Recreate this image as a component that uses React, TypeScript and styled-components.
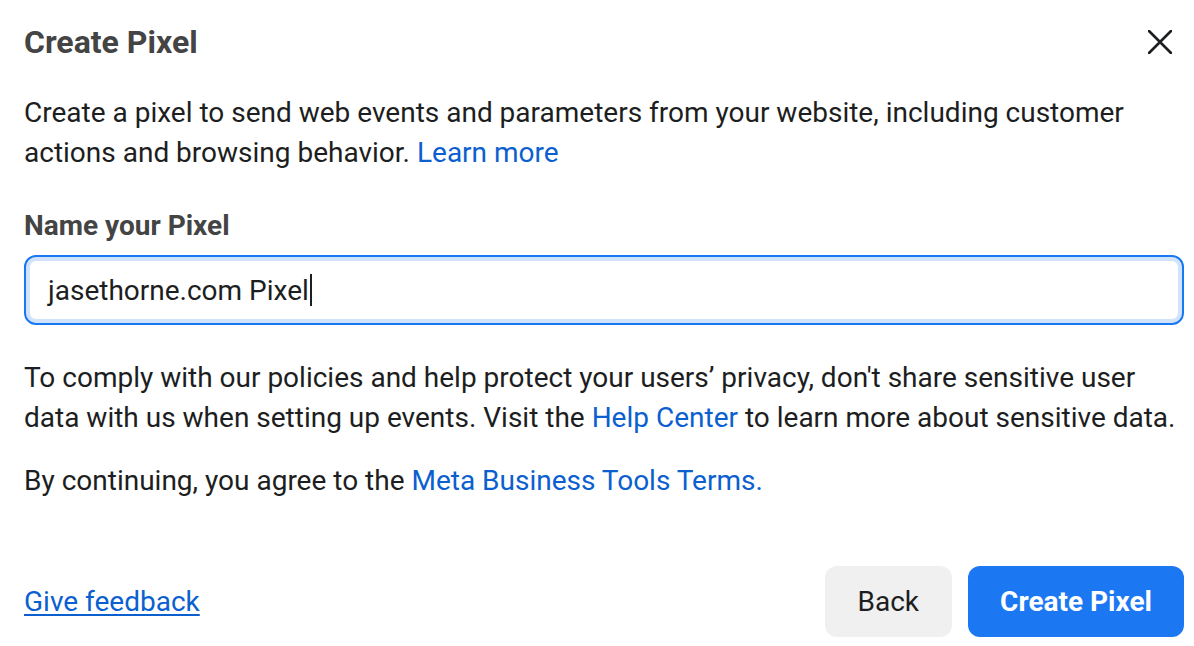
import React from "react";
import styled, { createGlobalStyle } from "styled-components";

const Global = createGlobalStyle`
  html, body { margin: 0; padding: 0; background: #fff; }
  body { font-family: Roboto, "Liberation Sans", Arial, sans-serif; -webkit-font-smoothing: antialiased; }
`;

const Dialog = styled.div`
  width: 1194px;
  height: 646px;
  box-sizing: border-box;
  padding: 0 10px 0 24px;
  display: flex;
  flex-direction: column;
  background: #fff;
`;

const Header = styled.div`
  height: 84px;
  display: flex;
  align-items: center;
  justify-content: space-between;
`;

const Title = styled.h1`
  margin: 0;
  font-size: 32px;
  font-weight: 700;
  color: #444444;
  line-height: 40px;
`;

const CloseButton = styled.button`
  border: none;
  background: transparent;
  padding: 0;
  width: 28px;
  height: 28px;
  margin-right: 10px;
  display: flex;
  align-items: center;
  justify-content: center;
  cursor: pointer;
`;

const Text = styled.p<{ $mt: number }>`
  margin: ${(p) => p.$mt}px 0 0;
  font-size: 28px;
  line-height: 39.5px;
  color: #1c1e21;
`;

const Link = styled.a<{ $underline?: boolean }>`
  color: #0b5fcf;
  text-decoration: ${(p) => (p.$underline ? "underline" : "none")};
  text-underline-offset: 3px;
  text-decoration-thickness: 2px;
  cursor: pointer;
`;

const FeedbackLink = styled(Link)`
  font-size: 28px;
`;

const Label = styled.label`
  margin-top: 34px;
  font-size: 28px;
  font-weight: 700;
  color: #444444;
  line-height: 40px;
`;

const Input = styled.div`
  margin-top: 9px;
  height: 70px;
  box-sizing: border-box;
  border: 2px solid #1877f2;
  border-radius: 12px;
  box-shadow: inset 0 0 0 4px #d1e3fb;
  display: flex;
  align-items: center;
  padding-left: 22px;
  font-size: 28px;
  color: #1c1e21;
`;

const Caret = styled.span`
  display: inline-block;
  width: 2px;
  height: 32px;
  background: #1c1e21;
  margin-left: 1px;
`;

const Footer = styled.div`
  margin-top: auto;
  margin-bottom: 9px;
  display: flex;
  align-items: center;
  justify-content: space-between;
`;

const Buttons = styled.div`
  display: flex;
  gap: 16px;
`;

const Button = styled.button<{ $primary?: boolean }>`
  height: 71px;
  border: none;
  border-radius: 12px;
  font-family: inherit;
  font-size: 28px;
  font-weight: ${(p) => (p.$primary ? 700 : 400)};
  padding: 0 ${(p) => (p.$primary ? 32 : 33)}px;
  background: ${(p) => (p.$primary ? "#1b77f2" : "#f0f0f0")};
  color: ${(p) => (p.$primary ? "#fff" : "#1c1e21")};
  cursor: pointer;
`;

export default function App() {
  return (
    <>
      <Global />
      <Dialog>
        <Header>
          <Title>Create Pixel</Title>
          <CloseButton aria-label="Close">
            <svg width="24" height="24" viewBox="0 0 24 24">
              <path d="M1 1 L23 23 M23 1 L1 23" stroke="#1c1e21" strokeWidth="2.6" strokeLinecap="round" />
            </svg>
          </CloseButton>
        </Header>
        <Text $mt={9}>
          Create a pixel to send web events and parameters from your website, including customer
          actions and browsing behavior. <Link>Learn more</Link>
        </Text>
        <Label>Name your Pixel</Label>
        <Input>
          jasethorne.com Pixel<Caret />
        </Input>
        <Text $mt={33}>
          To comply with our policies and help protect your users’ privacy, don't share sensitive user
          data with us when setting up events. Visit the <Link>Help Center</Link> to learn more about sensitive data.
        </Text>
        <Text $mt={24}>
          By continuing, you agree to the <Link>Meta Business Tools Terms.</Link>
        </Text>
        <Footer>
          <FeedbackLink $underline>Give feedback</FeedbackLink>
          <Buttons>
            <Button>Back</Button>
            <Button $primary>Create Pixel</Button>
          </Buttons>
        </Footer>
      </Dialog>
    </>
  );
}
